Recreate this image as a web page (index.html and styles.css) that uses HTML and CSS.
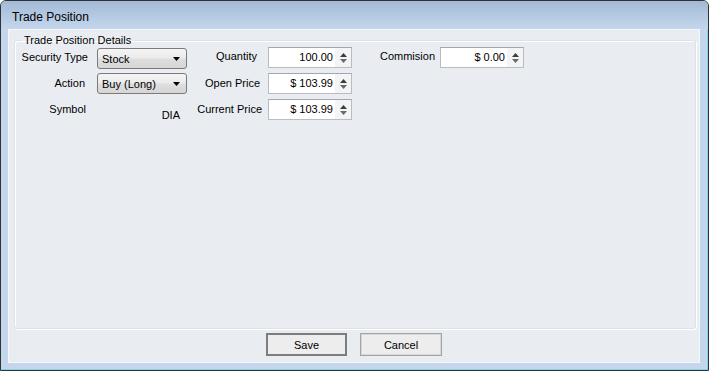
FILE: index.html
```html
<!DOCTYPE html>
<html lang="en">
<head>
	<meta charset="UTF-8">
	<title>Trade Position</title>
	<link rel="stylesheet" href="styles.css">
</head>
<body>

	<div class="window">
		<div class="titlebar">Trade Position</div>
		<div class="client">
			<fieldset class="group">
				<legend>Trade Position Details</legend>
				<div class="form">
					<span class="lbl first">Security Type</span>
					<div class="combo row1"><span>Stock</span><svg class="arrow" width="7" height="4" viewBox="0 0 7 4"><path d="M0 0H7L3.5 4Z" fill="#000"/></svg></div>
					<span class="lbl mid qty">Quantity</span>
					<div class="spin"><span class="val">100.00</span><span class="btns"><svg width="7" height="4" viewBox="0 0 7 4"><path d="M0 4H7L3.5 0Z" fill="#3c3c3c"/></svg><svg width="7" height="4" viewBox="0 0 7 4"><path d="M0 0H7L3.5 4Z" fill="#6a6a6a"/></svg></span></div>
					<span class="lbl last">Commision</span>
					<div class="spin"><span class="val">$ 0.00</span><span class="btns"><svg width="7" height="4" viewBox="0 0 7 4"><path d="M0 4H7L3.5 0Z" fill="#3c3c3c"/></svg><svg width="7" height="4" viewBox="0 0 7 4"><path d="M0 0H7L3.5 4Z" fill="#6a6a6a"/></svg></span></div>

					<span class="lbl first act">Action</span>
					<div class="combo"><span>Buy (Long)</span><svg class="arrow" width="7" height="4" viewBox="0 0 7 4"><path d="M0 0H7L3.5 4Z" fill="#000"/></svg></div>
					<span class="lbl mid open">Open Price</span>
					<div class="spin"><span class="val">$ 103.99</span><span class="btns"><svg width="7" height="4" viewBox="0 0 7 4"><path d="M0 4H7L3.5 0Z" fill="#3c3c3c"/></svg><svg width="7" height="4" viewBox="0 0 7 4"><path d="M0 0H7L3.5 4Z" fill="#6a6a6a"/></svg></span></div>

					<span class="lbl first sym">Symbol</span>
					<span class="symval">DIA</span>
					<span class="lbl mid">Current Price</span>
					<div class="spin"><span class="val">$ 103.99</span><span class="btns"><svg width="7" height="4" viewBox="0 0 7 4"><path d="M0 4H7L3.5 0Z" fill="#3c3c3c"/></svg><svg width="7" height="4" viewBox="0 0 7 4"><path d="M0 0H7L3.5 4Z" fill="#6a6a6a"/></svg></span></div>
				</div>
			</fieldset>
			<div class="buttons">
				<button class="btn default">Save</button>
				<button class="btn">Cancel</button>
			</div>
		</div>
	</div>

</body>
</html>
```

FILE: styles.css
```css
body{margin: 0;font-family: "Liberation Sans", Arial, sans-serif;font-size: 11px;color: #000;}
.window{width: 709px;height: 371px;box-sizing: border-box;border: 1px solid #2f3338;border-radius: 6px 6px 0 0;
	background: #c3d6ec;box-shadow: inset -1px -1px 0 #86d2ee;display: flex;flex-direction: column;overflow: hidden;}
.titlebar{height: 28px;line-height: 33px;padding-left: 11px;font-size: 12px;
	background: linear-gradient(to bottom, #a3bad6 0%, #bacee6 70%, #c3d6ec 100%);}
.client{height: 334px;margin: 0 8px 0 7px;box-sizing: border-box;border: 1px solid #f5f8fb;background: #e9edf1;
	display: flex;flex-direction: column;}

.group{flex: 1;margin: 4px 3px 0 5px;padding: 0;border: 1px solid #dde2e8;border-radius: 3px;
	box-shadow: inset 1px 1px 0 #fff, 1px 1px 0 #fff;min-width: 0;}
.group legend{margin-left: 7px;padding: 0 2px;line-height: 13px;}

.form{display: grid;grid-template-columns: 82px 90px 81px 84px 88px 84px;grid-auto-rows: 26px;align-items: start;}
.lbl{justify-self: end;align-self: center;margin-top: -7px;white-space: nowrap;}
.first{grid-column: 1;padding-right: 9px;margin-top: -6px;}
.mid{padding-right: 6px;}
.last{padding-right: 5px;margin-top: -9px;}
.qty{padding-right: 11px;margin-top: -9px;}
.open{padding-right: 8px;}
.act{padding-right: 12px;}
.sym{padding-right: 11px;}

.combo{height: 21px;box-sizing: border-box;border: 1px solid #7a7a7a;border-radius: 3px;padding: 0 5px 0 4px;
	background: linear-gradient(to bottom, #f4f4f4 0%, #ebebeb 48%, #dedede 52%, #d6d6d6 100%);
	display: flex;align-items: center;justify-content: space-between;}
.combo.row1{margin-top: 1px;}
.combo .arrow{margin-right: 1px;}
.symval{justify-self: end;padding-right: 7px;margin-top: 10px;}

.spin{height: 21px;box-sizing: border-box;border: 1px solid #b9bcc1;border-top-color: #a3a7ad;background: #fff;
	display: flex;}
.spin .val{flex: 1;text-align: right;line-height: 19px;padding-right: 2px;}
.spin .btns{width: 16px;background: #f3f4f6;display: flex;flex-direction: column;align-items: center;justify-content: space-between;padding: 5px 0 4px;box-sizing: border-box;}
.spin svg{display: block;}

.buttons{height: 33px;display: flex;justify-content: center;align-items: flex-start;gap: 13px;padding-top: 4px;box-sizing: border-box;}
.btn{height: 23px;width: 82px;font-family: inherit;font-size: 11px;color: #000;background: #ededed;
	border: 1px solid #a3a3a3;box-shadow: inset 0 0 0 1px #d8d8d8;padding: 0;}
.btn.default{width: 81px;border: 2px solid #7d7d7d;box-shadow: none;}
```
